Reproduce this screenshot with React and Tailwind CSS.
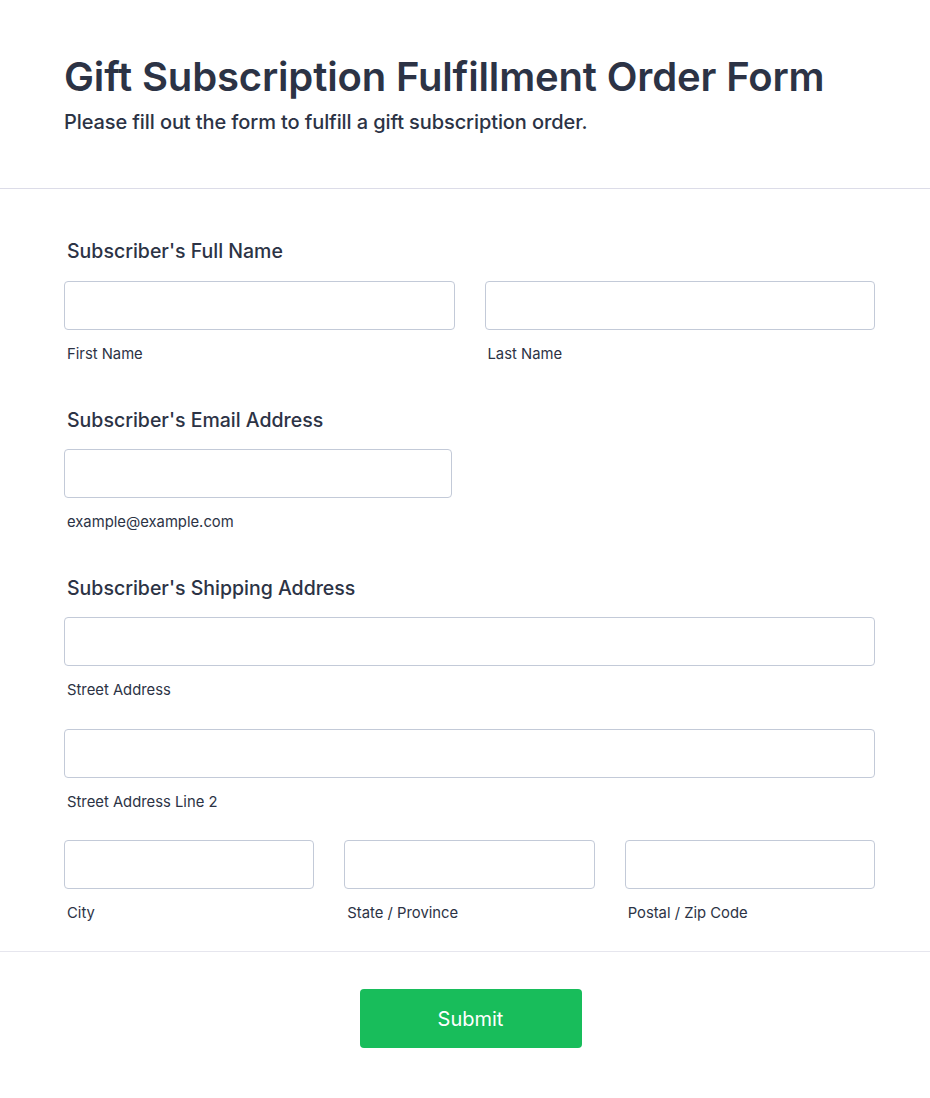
import React from "react";

function Field({ sub, className = "" }) {
    return (
        <div className={className}>
            <input
                type="text"
                className="block w-full h-[49px] rounded-[4px] border border-[#c3cad8] bg-white px-3 outline-none"
            />
            <div className="mt-[14px] h-5 px-[3px] text-[14.8px] leading-5 text-[#2c3345]">{sub}</div>
        </div>
    );
}

function Label({ children }) {
    return (
        <div className="h-6 px-[3px] text-[19.5px] leading-6 font-medium text-[#2c3345]">{children}</div>
    );
}

export default function App() {
    return (
        <div className="min-h-[1098px] bg-white text-[#2c3345]" style={{ fontFamily: "Inter, 'Noto Sans', sans-serif" }}>
            <header className="pt-[53px] pb-[54px] pl-16 pr-[55px] border-b border-[#dcdce8]">
                <h1 className="text-[40px] leading-[48px] font-semibold tracking-[-0.15px]">
                    Gift Subscription Fulfillment Order Form
                </h1>
                <p className="mt-[9px] text-[20px] leading-6 font-medium tracking-[-0.1px]">
                    Please fill out the form to fulfill a gift subscription order.
                </p>
            </header>

            <form className="pl-16 pr-[55px] pt-[50px] pb-[28px] border-b border-[#e6e6ee]">
                <Label>Subscriber's Full Name</Label>
                <div className="mt-[18px] grid grid-cols-2 gap-[30px]">
                    <Field sub="First Name" />
                    <Field sub="Last Name" />
                </div>

                <div className="mt-[44px]">
                    <Label>Subscriber's Email Address</Label>
                    <Field sub="example@example.com" className="mt-[17px] w-[388px]" />
                </div>

                <div className="mt-[44px]">
                    <Label>Subscriber's Shipping Address</Label>
                    <Field sub="Street Address" className="mt-[17px]" />
                    <Field sub="Street Address Line 2" className="mt-[29px]" />
                    <div className="mt-[28px] grid grid-cols-3 gap-[30px]">
                        <Field sub="City" />
                        <Field sub="State / Province" />
                        <Field sub="Postal / Zip Code" />
                    </div>
                </div>
            </form>

            <div className="flex justify-center pl-16 pr-[53px] pt-[37px]">
                <button
                    type="button"
                    className="w-[222px] h-[59px] rounded-[4px] bg-[#18bd5b] text-white text-[20px] font-normal"
                >
                    Submit
                </button>
            </div>
        </div>
    );
}
